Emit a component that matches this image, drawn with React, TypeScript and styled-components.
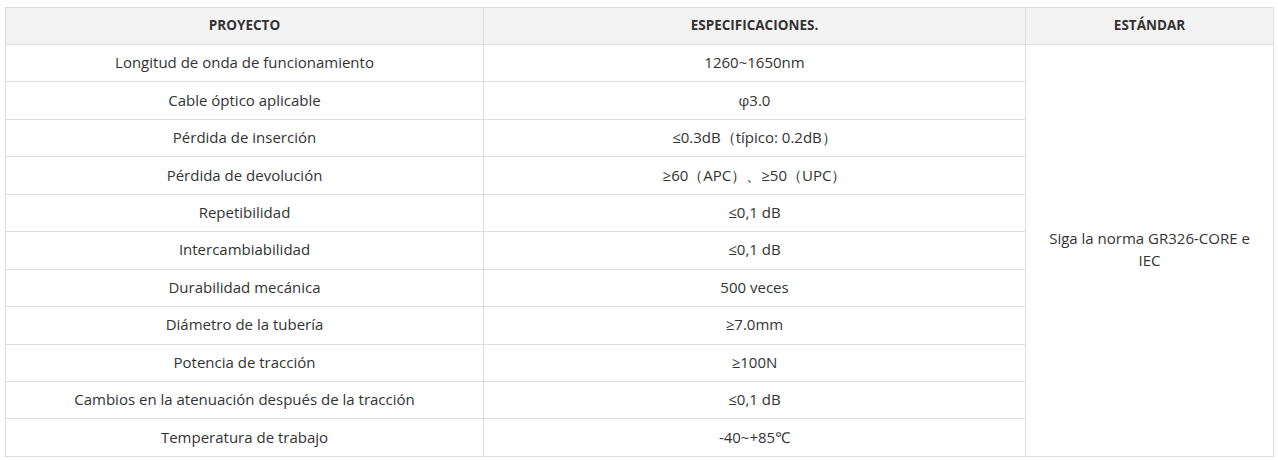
import React from "react";
import styled, { createGlobalStyle } from "styled-components";

const Global = createGlobalStyle`
  html, body { margin: 0; padding: 0; background: #fff; }
  body { padding: 7px 5px 0 5px; font-family: "Open Sans", "Noto Sans", sans-serif; color: #333; }
`;

const Table = styled.table`
  width: 1268px;
  border-collapse: collapse;
  table-layout: fixed;
  font-size: 15px;
`;

const Col = styled.col<{ $w: number }>`
  width: ${(p) => p.$w}px;
`;

const Th = styled.th`
  background: #f3f3f3;
  border: 1px solid #dddddd;
  height: 34px;
  padding: 0 8px 2px;
  font-size: 13.5px;
  font-weight: 700;
  text-transform: uppercase;
  color: #333;
  text-align: center;
  vertical-align: middle;
`;

const Td = styled.td`
  border: 1px solid #dddddd;
  height: 34.45px;
  padding: 0 15px 2px;
  text-align: center;
  vertical-align: middle;
  line-height: 22px;
  color: #333;
`;

const rows: [string, string][] = [
  ["Longitud de onda de funcionamiento", "1260~1650nm"],
  ["Cable óptico aplicable", "φ3.0"],
  ["Pérdida de inserción", "≤0.3dB（típico: 0.2dB）"],
  ["Pérdida de devolución", "≥60（APC）、≥50（UPC）"],
  ["Repetibilidad", "≤0,1 dB"],
  ["Intercambiabilidad", "≤0,1 dB"],
  ["Durabilidad mecánica", "500 veces"],
  ["Diámetro de la tubería", "≥7.0mm"],
  ["Potencia de tracción", "≥100N"],
  ["Cambios en la atenuación después de la tracción", "≤0,1 dB"],
  ["Temperatura de trabajo", "-40~+85℃"],
];

export default function App() {
  return (
    <>
      <Global />
      <Table>
        <colgroup>
          <Col $w={478} />
          <Col $w={542} />
          <Col $w={248} />
        </colgroup>
        <thead>
          <tr>
            <Th>Proyecto</Th>
            <Th>Especificaciones.</Th>
            <Th>Estándar</Th>
          </tr>
        </thead>
        <tbody>
          {rows.map((r, i) => (
            <tr key={i}>
              <Td>{r[0]}</Td>
              <Td>{r[1]}</Td>
              {i === 0 && (
                <Td rowSpan={rows.length}>
                  Siga la norma GR326-CORE e IEC
                </Td>
              )}
            </tr>
          ))}
        </tbody>
      </Table>
    </>
  );
}
